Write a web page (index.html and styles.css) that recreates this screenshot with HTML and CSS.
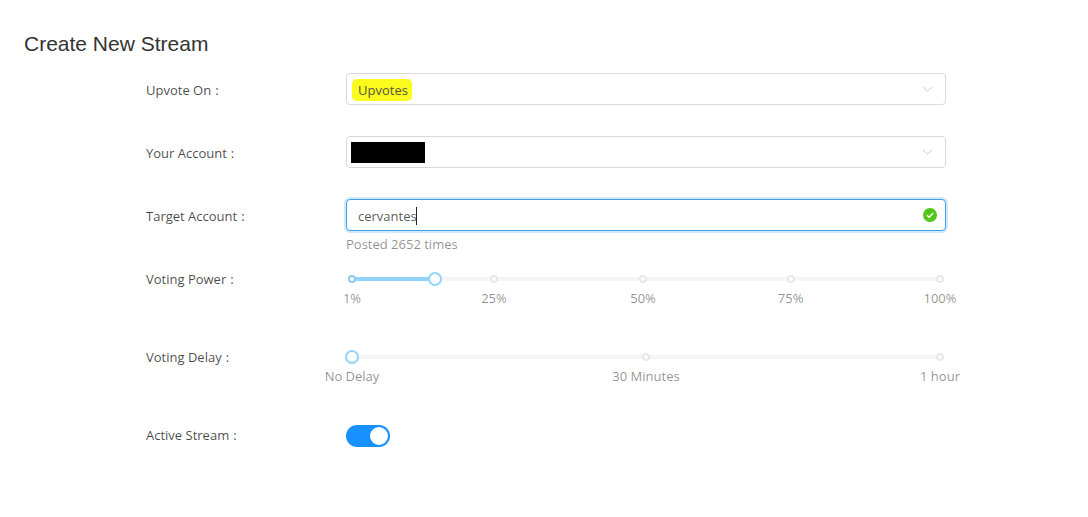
FILE: index.html
```html
<!DOCTYPE html>
<html lang="en">
<head>
<meta charset="utf-8">
<title>Create New Stream</title>
<link rel="stylesheet" href="styles.css">
</head>
<body>
<main class="page">
  <h1 class="title">Create New Stream</h1>
  <form class="form">
    <div class="row row-select">
      <label class="label">Upvote On<span class="colon">:</span></label>
      <div class="select">
        <span class="value"><span class="marked">Upvotes</span></span>
        <svg class="chev" viewBox="0 0 12 8"><path d="M1 1.5 6 6.5 11 1.5"/></svg>
      </div>
    </div>
    <div class="row row-select">
      <label class="label">Your Account<span class="colon">:</span></label>
      <div class="select">
        <span class="redacted"></span>
        <svg class="chev" viewBox="0 0 12 8"><path d="M1 1.5 6 6.5 11 1.5"/></svg>
      </div>
    </div>
    <div class="row row-target">
      <label class="label">Target Account<span class="colon">:</span></label>
      <div class="control">
        <div class="input">
          <span class="value">cervantes</span><span class="caret"></span>
          <svg class="ok" viewBox="0 0 14 14"><circle cx="7" cy="7" r="7" fill="#52c41a"/><path d="M3.9 7.2 6.1 9.3 10.2 5" fill="none" stroke="#fff" stroke-width="1.5"/></svg>
        </div>
        <div class="help">Posted 2652 times</div>
      </div>
    </div>
    <div class="row row-power">
      <label class="label">Voting Power<span class="colon">:</span></label>
      <div class="slider">
        <div class="rail"></div>
        <div class="fill" style="width:14.1%"></div>
        <span class="dot on" style="left:0%"></span>
        <span class="dot" style="left:24.15%"></span>
        <span class="dot" style="left:49.5%"></span>
        <span class="dot" style="left:74.6%"></span>
        <span class="dot" style="left:100%"></span>
        <span class="handle" style="left:14.1%"></span>
        <span class="mark" style="left:0%">1%</span>
        <span class="mark" style="left:24.15%">25%</span>
        <span class="mark" style="left:49.5%">50%</span>
        <span class="mark" style="left:74.6%">75%</span>
        <span class="mark" style="left:100%">100%</span>
      </div>
    </div>
    <div class="row row-delay">
      <label class="label">Voting Delay<span class="colon">:</span></label>
      <div class="slider">
        <div class="rail"></div>
        <span class="dot" style="left:50%"></span>
        <span class="dot" style="left:100%"></span>
        <span class="handle" style="left:0%"></span>
        <span class="mark" style="left:0%">No Delay</span>
        <span class="mark" style="left:50%">30 Minutes</span>
        <span class="mark" style="left:100%">1 hour</span>
      </div>
    </div>
    <div class="row row-switch">
      <label class="label">Active Stream<span class="colon">:</span></label>
      <div class="switch"><span class="knob"></span></div>
    </div>
  </form>
</main>
</body>
</html>
```
FILE: styles.css
```css
* { box-sizing: border-box; }
html, body { margin: 0; background: #fff; }
body { font-family: "Open Sans", "Noto Sans", sans-serif; font-size: 13px; color: rgba(0,0,0,.65); }
.page { padding: 32px 0 0 24px; }
.title { margin: 0; font: 400 21px/24px "Liberation Sans", Arial, sans-serif; color: #333; }
.form { margin-top: 17px; padding-left: 122px; }
.row { display: grid; grid-template-columns: 200px 600px; }
.row-select { height: 63px; }
.row-target { height: 68px; }
.row-power { height: 78px; }
.row-delay { height: 75px; }
.label { padding-top: 1px; line-height: 32px; color: rgba(0,0,0,.72); white-space: nowrap; }
.colon { margin-left: 4px; }
.row-power .label, .row-delay .label { padding-top: 0; line-height: 24px; }
.row-switch .label { padding-top: 0; line-height: 30px; }
.select, .input { position: relative; display: flex; align-items: center; height: 32px; border: 1px solid #d9d9d9; border-radius: 4px; background: #fff; }
.value { padding: 2px 0 0 11px; line-height: 20px; color: rgba(0,0,0,.68); }
.marked { display: inline-block; margin: -2px 0 0 -6px; padding: 1px 4px 1px 6px; border-radius: 5px; background: #fbfb1e; color: #55553a; }
.redacted { display: block; width: 74px; height: 21px; margin-left: 4px; background: #000; }
.chev { position: absolute; right: 12px; top: 11px; width: 11px; height: 8px; fill: none; stroke: #c4c4c4; stroke-width: 1; }
.input { border-color: #40a0e8; box-shadow: 0 0 0 2px rgba(24,144,255,.2); }
.caret { width: 1px; height: 18px; margin: 1px 0 0 -1px; background: #222; }
.ok { position: absolute; right: 8px; top: 8px; width: 14px; height: 14px; }
.help { margin-top: 3px; line-height: 20px; color: rgba(0,0,0,.45); }
.slider { position: relative; height: 24px; margin: 0 6px; }
.rail, .fill { position: absolute; left: 0; top: 10px; height: 4px; border-radius: 2px; }
.rail { width: 100%; background: #f5f5f5; }
.fill { background: #91d5ff; }
.dot { position: absolute; top: 8px; width: 8px; height: 8px; margin-left: -4px; border: 2px solid #e8e8e8; border-radius: 50%; background: #fff; }
.dot.on { border-color: #8cc8f0; }
.handle { position: absolute; top: 5px; width: 14px; height: 14px; margin-left: -7px; border: 2px solid #91d5ff; border-radius: 50%; background: #fff; }
.mark { position: absolute; top: 21px; transform: translateX(-50%); line-height: 20px; color: rgba(0,0,0,.45); white-space: nowrap; }
.switch { display: flex; justify-content: flex-end; align-items: center; width: 44px; height: 22px; padding-right: 2px; margin-top: 5px; border-radius: 11px; background: #1890ff; }
.knob { width: 18px; height: 18px; border-radius: 50%; background: #fff; }
```
